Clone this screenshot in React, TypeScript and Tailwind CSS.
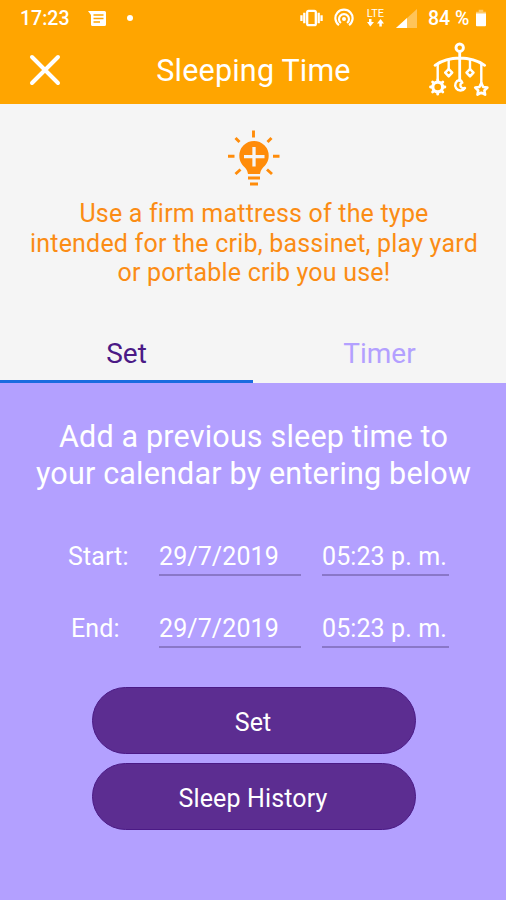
import { useState } from 'react';

const rows = [
  { label: 'Start:', date: '29/7/2019', time: '05:23 p. m.', offset: 'pl-[11px]' },
  { label: 'End:', date: '29/7/2019', time: '05:23 p. m.', offset: 'pl-[14px]' },
];

function StatusBar() {
  return (
    <div className="flex h-9 items-center pl-5 pr-5 text-[19.500px] font-medium">
      <span className="w-[68px] pt-px">17:23</span>
      <svg className="h-[17px] w-[19px]" viewBox="0 0 19 17">
        <path d="M0 1h16.5a1.5 1.5 0 0 1 1.500 1.500v12a1.500 1.500 0 0 1-1.500 1.500h-12a1.500 1.500 0 0 1-1.500-1.500V5z" fill="white" />
        <path d="M5.500 5h10M5.500 8.500h10M5.500 12h6.500" stroke="#ffa500" strokeWidth="1.300" />
      </svg>
      <span className="ml-5 h-[6px] w-[6px] rounded-full bg-white" />

      <div className="ml-auto flex items-center">
        <svg className="h-[18px] w-[23px]" viewBox="0 0 24 18" fill="none" stroke="white" strokeWidth="2.400">
          <rect x="7.500" y="1.500" width="9" height="15" rx="1.500" />
          <path d="M4.500 3.500v11M19.500 3.500v11M1.500 6v6M22.500 6v6" />
        </svg>
        <svg className="ml-[11px] h-5 w-5" viewBox="0 0 20 20" fill="none" stroke="white" strokeWidth="2.200">
          <path d="M5 17.200a8.600 8.600 0 1 1 10 0" />
          <path d="M6.900 15a5 5 0 1 1 6.200 0" />
          <circle cx="10" cy="11" r="2" fill="white" stroke="none" />
        </svg>
        <div className="ml-[12px] flex w-[19px] flex-col items-center">
          <span className="text-[11px] leading-[10px] font-normal">LTE</span>
          <svg className="h-2 w-[17px]" viewBox="0 0 17 8" fill="white">
            <path d="M2 0h2.500v3H7L3.300 7.500 0 3h2zM12.300 7.500h2.500V4.500H17L13.600 0 10 4.500h2.300z" />
          </svg>
        </div>
        <svg className="ml-[11px] h-[19px] w-[21px]" viewBox="0 0 21 19">
          <path d="M21 0v19H0z" fill="white" opacity=".35" />
          <path d="M11 9v10H0z" fill="white" />
        </svg>
        <span className="ml-[11px] w-[45px] pt-px whitespace-nowrap">84 %</span>
        <svg className="ml-[3px] h-[18px] w-[10px]" viewBox="0 0 11 18">
          <path d="M0 2h3V0h5v2h3v3H0z" fill="white" opacity=".4" />
          <path d="M0 4h11v13a1 1 0 0 1-1 1H1a1 1 0 0 1-1-1z" fill="white" />
        </svg>
      </div>
    </div>
  );
}

function MobileIcon() {
  return (
    <svg className="h-14 w-[62px]" viewBox="0 0 62 56" fill="none" stroke="white" strokeWidth="2.800" strokeLinecap="round" strokeLinejoin="round">
      <circle cx="31.700" cy="5.700" r="3.700" strokeWidth="2.900" />
      <path d="M31.700 9.500v29M7 23.300c7-4.800 15-7.300 24.700-7.300s18 2.500 25 7.300" />
      <path d="M9.700 22v15M20.700 18v9M42 18v9M53.300 22v20" strokeWidth="2.400" />
      <path d="M20.700 27l3.500 3.700-3.500 3.700-3.500-3.700zM42 27l3.500 3.700-3.500 3.700-3.500-3.700z" strokeWidth="2.500" />
      <circle cx="9.700" cy="45" r="4.900" strokeWidth="3.200" />
      <path d="M9.700 37.800v1.500M9.700 50.700v1.500M2.500 45H4M15.400 45h1.500M4.600 39.900l1 1M13.800 49.100l1 1M4.600 50.100l1-1M13.800 40.900l1-1" strokeWidth="2.800" />
      <path d="M31.500 38a5.300 5.300 0 1 0 5.500 8c-3 .7-4.600-.8-4.600-2.800 0-1.300.8-2.200 1.900-2.500-.5-1.500-1.500-2.500-2.800-2.700z" strokeWidth="2.400" />
      <path d="M53.300 41l1.900 4 4.200.6-3 2.900.7 4.200-3.800-2-3.800 2 .7-4.200-3-2.900 4.200-.6z" strokeWidth="2.600" />
    </svg>
  );
}

function TipIcon() {
  return (
    <svg className="ml-[2px] h-[56px] w-[54px]" viewBox="0 0 54 56">
      <path d="M27 11a14.700 14.700 0 0 0-14.700 14.700c0 6.500 3.400 9.500 6.200 12.500 1.700 1.900 2 3.600 2.500 5.800h12c.5-2.200.8-3.900 2.500-5.800 2.800-3 6.200-6 6.200-12.500A14.700 14.700 0 0 0 27 11z" fill="#ff8c0a" />
      <path d="M27 17v19.500M17 26.700h20.500" stroke="#f5f5f5" strokeWidth="3.300" />
      <path d="M21 48h12M23 54h8M26.500.5v7M1 26.300h6.500M46 26.300h6.500M8.500 8l4 4M44.500 8l-4 4M8.500 44l5-4.500M45 44l-5-4.500" stroke="#ff8c0a" strokeWidth="2.900" />
    </svg>
  );
}

export default function App() {
  const [tab, setTab] = useState('set');

  return (
    <div className="flex h-[900px] w-[506px] flex-col overflow-hidden bg-[#b3a0ff] font-['Roboto',sans-serif] text-white">
      <header className="h-[104px] bg-[#ffa500]">
        <StatusBar />
        <div className="flex h-[68px] items-center pl-[29px] pr-4">
          <button aria-label="Close" className="w-[62px]">
            <svg className="h-8 w-8" viewBox="0 0 32 32" stroke="white" strokeWidth="4" strokeLinecap="round">
              <path d="M3 3l26 26M29 3L3 29" />
            </svg>
          </button>
          <h1 className="flex-1 pt-[2px] pr-[12px] text-center text-[30.500px] tracking-[0.2px]">Sleeping Time</h1>
          <MobileIcon />
        </div>
      </header>

      <section className="flex h-[279px] flex-col bg-[#f5f5f5]">
        <div className="flex flex-1 flex-col items-center pt-[26px] text-center text-[#fb8c14]">
          <TipIcon />
          <p className="mt-[13px] pl-[2px] text-[25px] leading-[29.500px] tracking-[0.2px]">
            Use a firm mattress of the type
            <br />
            intended for the crib, bassinet, play yard
            <br />
            or portable crib you use!
          </p>
        </div>
        <div className="grid h-[59px] grid-cols-2 text-[28px]">
          <button
            onClick={() => setTab('set')}
            className={`border-b-3 pt-1 ${tab === 'set' ? 'border-[#1a6be0] text-[#4b1a86]' : 'border-transparent text-[#b3a0ff]'}`}
          >
            Set
          </button>
          <button
            onClick={() => setTab('timer')}
            className={`border-b-3 pt-1 ${tab === 'timer' ? 'border-[#1a6be0] text-[#4b1a86]' : 'border-transparent text-[#b3a0ff]'}`}
          >
            Timer
          </button>
        </div>
      </section>

      <main className="flex flex-1 flex-col items-center pt-[36px]">
        <h2 className="pl-px text-center text-[30.500px] leading-[36.500px] tracking-[0.18px]">
          Add a previous sleep time to
          <br />
          your calendar by entering below
        </h2>

        <div className="mt-[46px] flex flex-col gap-[34px] text-[25px] tracking-[0.1px]">
          {rows.map((row) => (
            <div key={row.label} className="flex h-[38px] items-start leading-[37px]">
              <span className={`w-[102px] ${row.offset}`}>{row.label}</span>
              <span className="mr-[21px] h-[38px] w-[142px] border-b-2 border-[#8a77c8]">{row.date}</span>
              <span className="h-[38px] w-[127px] border-b-2 border-[#8a77c8] whitespace-nowrap">{row.time}</span>
            </div>
          ))}
        </div>

        <div className="mt-[39px] flex w-[324px] translate-x-px flex-col gap-[9px] text-[25px]">
          <button className="h-[67px] rounded-full border border-[#4b1a86] bg-[#5c2d91] pt-[4px] pr-[2px]">Set</button>
          <button className="h-[67px] rounded-full border border-[#4b1a86] bg-[#5c2d91] pt-[4px] pr-[2px] tracking-[0.15px]">Sleep History</button>
        </div>
      </main>
    </div>
  );
}
